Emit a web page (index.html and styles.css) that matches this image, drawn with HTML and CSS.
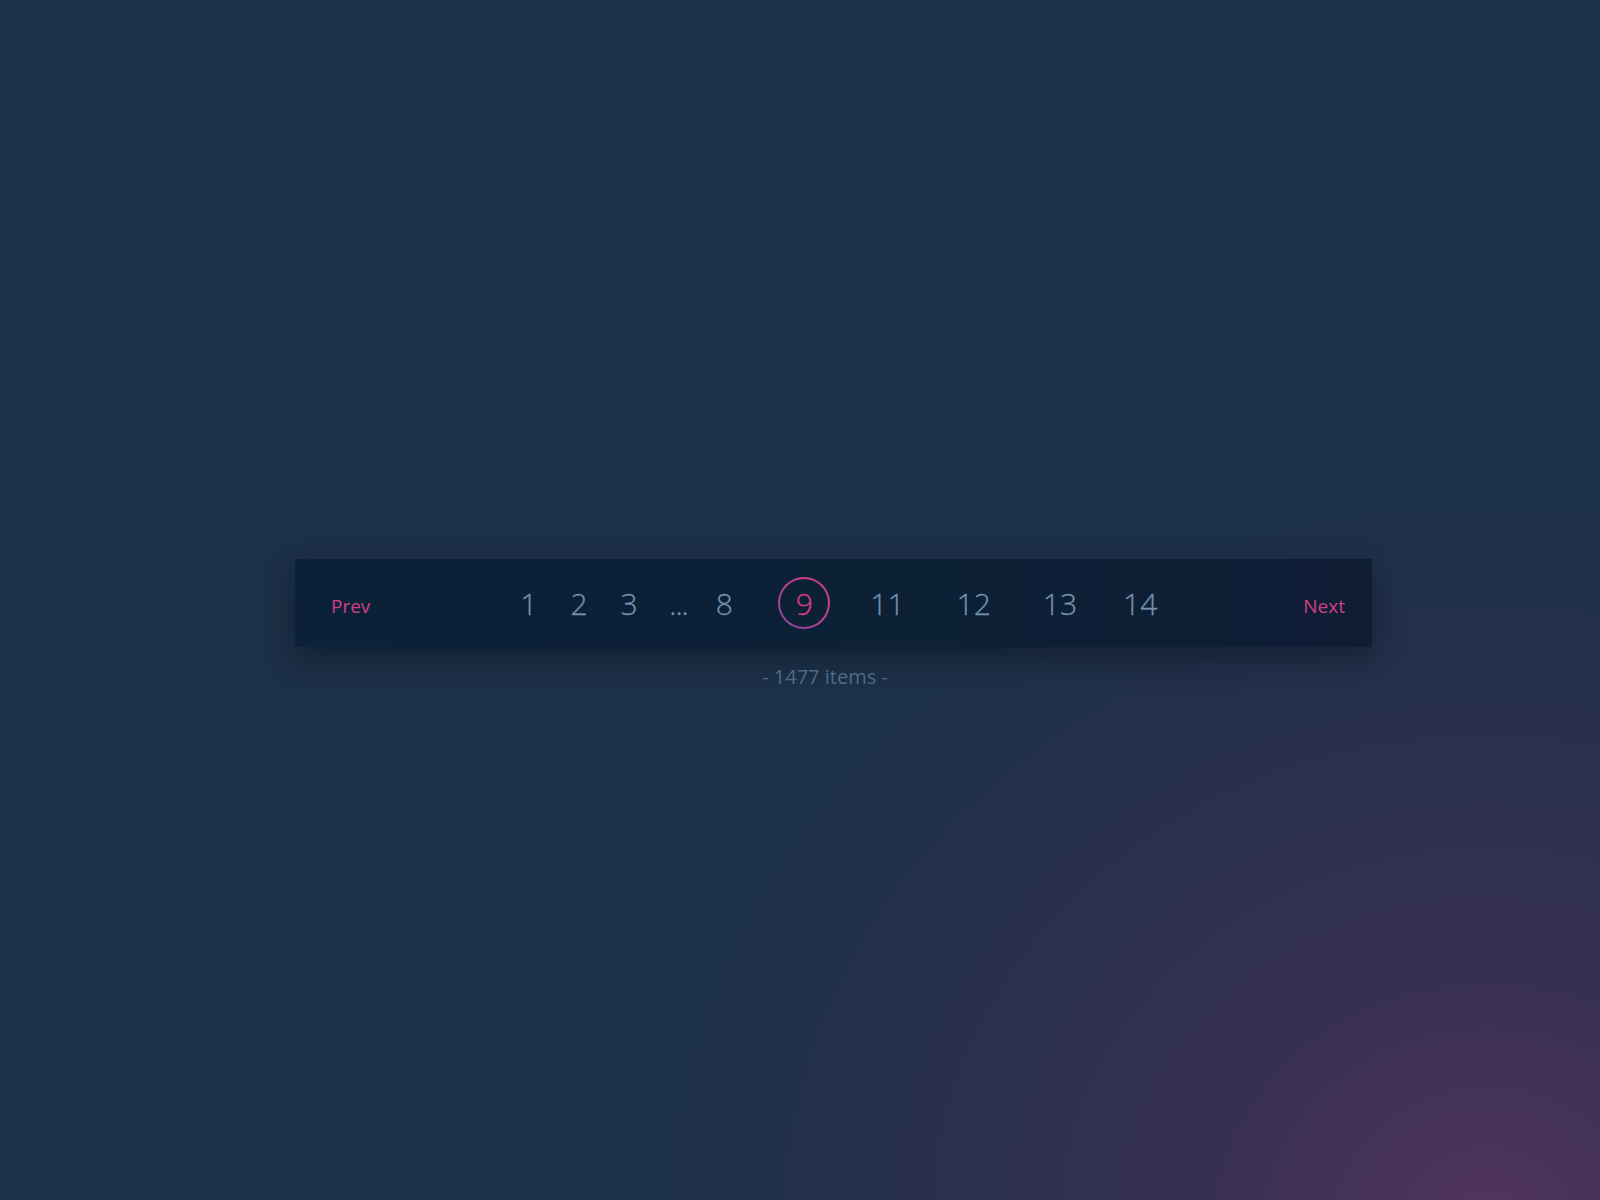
FILE: index.html
```html
<!DOCTYPE html>
<html lang="en">
<head>
<meta charset="utf-8">
<title>Pagination</title>
<link rel="stylesheet" href="styles.css">
</head>
<body>
<div class="page-wrap">
  <nav class="pager">
    <a class="nav-link prev" href="#">Prev</a>
    <div class="pages">
      <a class="page" href="#">1</a>
      <a class="page" href="#">2</a>
      <a class="page" href="#">3</a>
      <span class="dots">...</span>
      <a class="page" href="#">8</a>
      <a class="page active" href="#">9</a>
      <a class="page spread" href="#">11</a>
      <a class="page spread" href="#">12</a>
      <a class="page spread" href="#">13</a>
      <a class="page spread last" href="#">14</a>
    </div>
    <a class="nav-link next" href="#">Next</a>
  </nav>
  <div class="count">- 1477 items -</div>
</div>
</body>
</html>
```

FILE: styles.css
```css
html, body {
  margin: 0;
  height: 100%;
}

body {
  width: 1600px;
  height: 1200px;
  overflow: hidden;
  background:
    radial-gradient(ellipse 820px 720px at 93% 102%, rgba(82, 52, 92, 1) 0%, rgba(64, 48, 86, 0.75) 35%, rgba(28, 48, 71, 0) 100%),
    #1c3047;
  font-family: "Open Sans", "Noto Sans", sans-serif;
}

.page-wrap {
  padding: 559px 228px 0 295px;
  display: flex;
  flex-direction: column;
}

.pager {
  height: 88px;
  display: flex;
  align-items: center;
  padding: 0 27px 0 36px;
  background: linear-gradient(90deg, #0b2137 0%, #0c2036 60%, #0f1d35 100%);
  box-shadow: 0 12px 28px rgba(8, 14, 28, 0.45);
}

.nav-link {
  font-size: 19px;
  color: #d23f85;
  text-decoration: none;
  padding-top: 5px;
}

.next {
  margin-left: auto;
}

.pages {
  display: flex;
  align-items: center;
  margin-left: 133.5px;
}

.page,
.dots {
  font-size: 30px;
  font-weight: 300;
  color: #7591ab;
  text-decoration: none;
  margin: 0 16.5px;
  -webkit-text-stroke: 0.3px currentColor;
}

.dots {
  margin: 0 11.5px 0 15px;
  letter-spacing: -1px;
}

.page.active {
  width: 48px;
  height: 48px;
  margin: 0 14px 0 29px;
  border: 2px solid transparent;
  border-radius: 50%;
  display: flex;
  align-items: center;
  justify-content: center;
  color: #d23f85;
  background:
    linear-gradient(#0c2036, #0c2036) padding-box,
    linear-gradient(40deg, #7a4aa6 0%, #b5428f 45%, #d43f82 100%) border-box;
}

.page.spread {
  margin: 0 26px;
}

.page.spread.last {
  margin-left: 20px;
}

.count {
  margin-top: 16px;
  padding-right: 17px;
  text-align: center;
  font-size: 20px;
  color: #4e6a85;
}
```
